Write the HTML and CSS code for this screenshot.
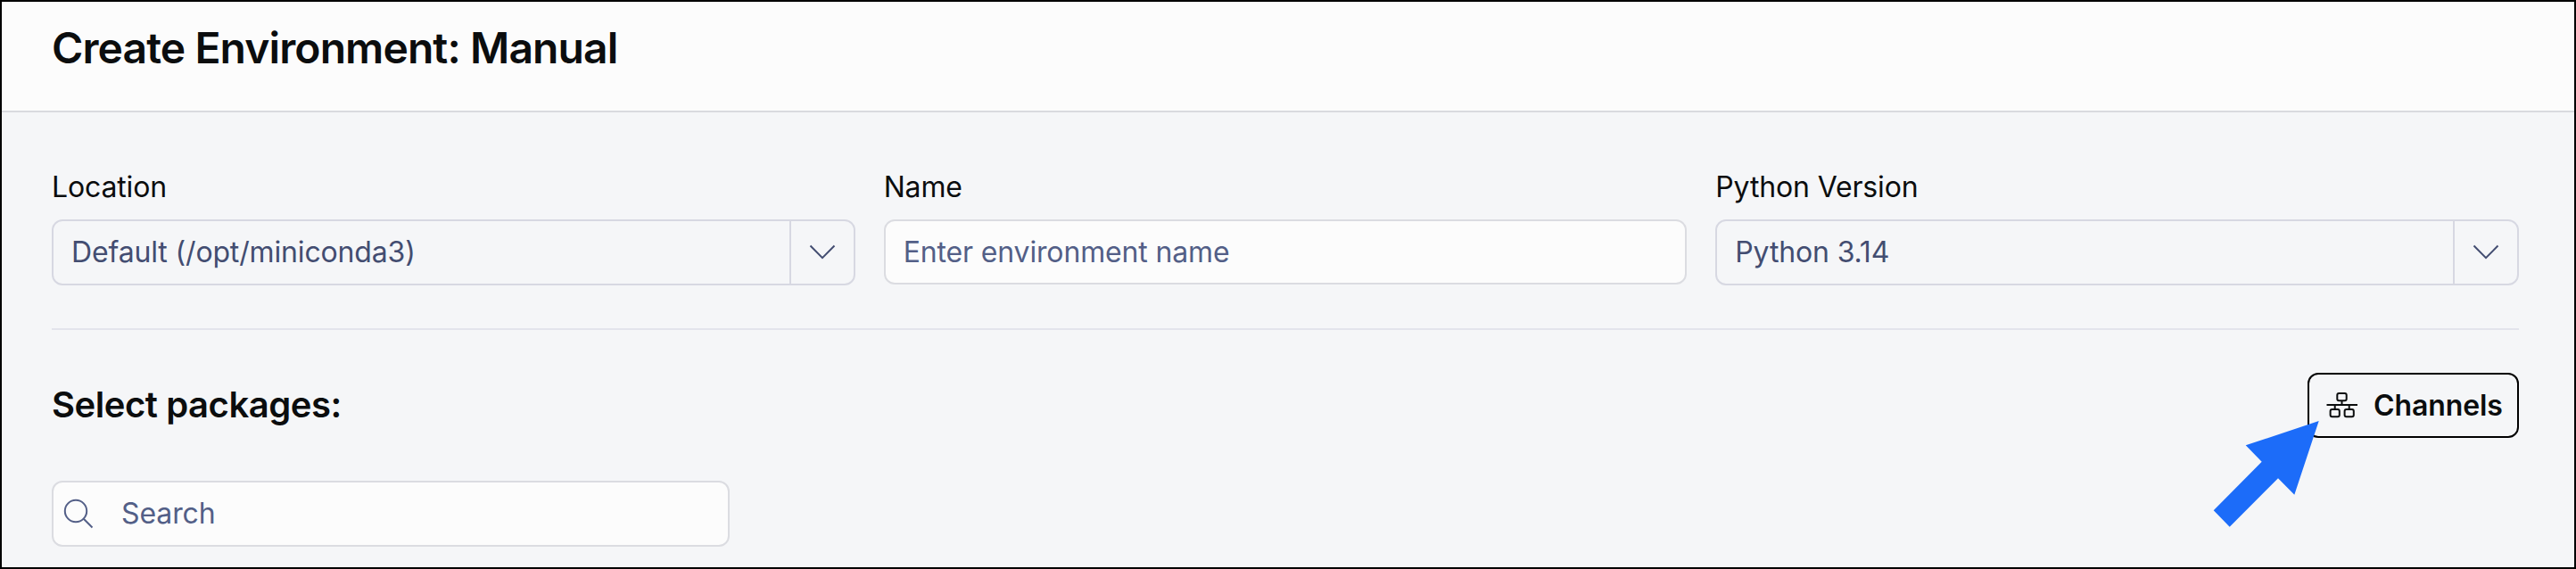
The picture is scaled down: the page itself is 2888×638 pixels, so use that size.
FILE: index.html
```html
<!DOCTYPE html>
<html lang="en">
<head>
	<meta charset="UTF-8">
	<title>Create Environment</title>
	<link rel="stylesheet" href="styles.css">
</head>
<body>
	<div class="window">
		<header class="header">
			<h1 class="title">Create Environment: Manual</h1>
		</header>
		<main class="content">
			<div class="fields">
				<div class="field">
					<div class="label">Location</div>
					<div class="select">
						<div class="value">Default (/opt/miniconda3)</div>
						<div class="toggle">
							<svg width="30" height="18" viewBox="0 0 30 18"><path d="M1.5 1.5L15 15.2L28.5 1.5"/></svg>
						</div>
					</div>
				</div>
				<div class="field">
					<label class="label" for="envname">Name</label>
					<input class="input" id="envname" type="text" placeholder="Enter environment name">
				</div>
				<div class="field">
					<div class="label">Python Version</div>
					<div class="select">
						<div class="value">Python 3.14</div>
						<div class="toggle">
							<svg width="30" height="18" viewBox="0 0 30 18"><path d="M1.5 1.5L15 15.2L28.5 1.5"/></svg>
						</div>
					</div>
				</div>
			</div>
			<div class="packages">
				<h2 class="subtitle">Select packages:</h2>
				<button class="channels">
					<svg width="36" height="29" viewBox="0 0 36 29">
						<rect x="12.3" y="1" width="10.4" height="8.2" rx="2"/>
						<rect x="4.6" y="19" width="10.2" height="8.2" rx="2"/>
						<rect x="20.6" y="19" width="10.2" height="8.2" rx="2"/>
						<path d="M0.5 14H35M17.5 10V14M9.7 14V19M25.7 14V19"/>
					</svg>
					<span>Channels</span>
				</button>
				<svg class="arrow" width="120" height="120" viewBox="0 0 120 120"><path d="M119.7 0L37.7 27.3L55.7 45.7L1.7 100.3L19.7 118.7L74 64.3L92.3 82.7Z"/></svg>
			</div>
			<div class="search">
				<svg width="34" height="34" viewBox="0 0 34 34"><circle cx="14" cy="14" r="12.2"/><path d="M22.8 22.8L32.5 32.5"/></svg>
				<input class="searchinput" type="text" placeholder="Search">
			</div>
		</main>
	</div>
</body>
</html>
```
FILE: styles.css
```css
*{
	margin: 0;
	padding: 0;
	box-sizing: border-box;
	font-family: Inter, "Liberation Sans", sans-serif;
}
body{
	overflow: hidden;
}
.window{
	width: 100vw;
	height: 100vh;
	border: 2px solid #000;
	background-color: #f5f6f8;
	color: #0b0d0e;
}
.header{
	height: 124px;
	padding: 22px 56px 0;
	background-color: #fcfcfc;
	border-bottom: 2px solid #d9dadf;
}
.title{
	font-size: 48px;
	line-height: 60px;
	font-weight: 600;
	letter-spacing: -0.9px;
}
.content{
	padding: 62px 62px 0 56px;
}
.fields{
	display: grid;
	grid-template-columns: repeat(3, 1fr);
	gap: 32px;
	height: 182px;
	border-bottom: 2px solid #e3e4ec;
}
.label{
	display: block;
	height: 58px;
	font-size: 32px;
	line-height: 44px;
	letter-spacing: -0.15px;
}
.select{
	display: flex;
	height: 74px;
	border: 2px solid #d7d8e2;
	border-radius: 12px;
	color: #434d71;
}
.value{
	flex: 1;
	padding-left: 20px;
	font-size: 32px;
	line-height: 70px;
	letter-spacing: -0.15px;
}
.toggle{
	display: flex;
	align-items: center;
	justify-content: center;
	width: 72px;
	border-left: 2px solid #d7d8e2;
}
svg{
	flex: none;
	fill: none;
	stroke: currentColor;
	stroke-width: 2;
}
.input{
	display: block;
	width: 100%;
	height: 73px;
	padding: 0 20px;
	border: 2px solid #dbdce1;
	border-radius: 12px;
	background-color: #fcfcfc;
	font-size: 32px;
	letter-spacing: -0.15px;
}
.input::placeholder, .searchinput::placeholder{
	color: #535f87;
	opacity: 1;
}
.packages{
	position: relative;
	display: flex;
	align-items: center;
	justify-content: space-between;
	height: 73px;
	margin-top: 48px;
}
.subtitle{
	padding-bottom: 2px;
	font-size: 40px;
	line-height: 50px;
	font-weight: 600;
	letter-spacing: -0.45px;
}
.channels{
	display: flex;
	align-items: center;
	gap: 17px;
	width: 237px;
	height: 73px;
	padding-left: 19px;
	border: 2px solid #000;
	border-radius: 12px;
	background: none;
	color: #0b0d0e;
	font-size: 32px;
	font-weight: 600;
	letter-spacing: -0.1px;
}
/* pointer over the corner of the channels button */
.arrow{
	position: absolute;
	right: 224px;
	top: 54px;
	fill: #1c6cf9;
	stroke: none;
}
.search{
	display: flex;
	align-items: center;
	width: 760px;
	height: 74px;
	margin-top: 48px;
	padding-left: 11px;
	border: 2px solid #dbdce1;
	border-radius: 12px;
	background-color: #fcfcfc;
	color: #535f87;
}
.searchinput{
	flex: 1;
	margin-left: 31px;
	padding-bottom: 2px;
	border: none;
	background: none;
	font-size: 32px;
	letter-spacing: -0.1px;
}
.input:focus, .searchinput:focus{
	outline: none;
}
```
